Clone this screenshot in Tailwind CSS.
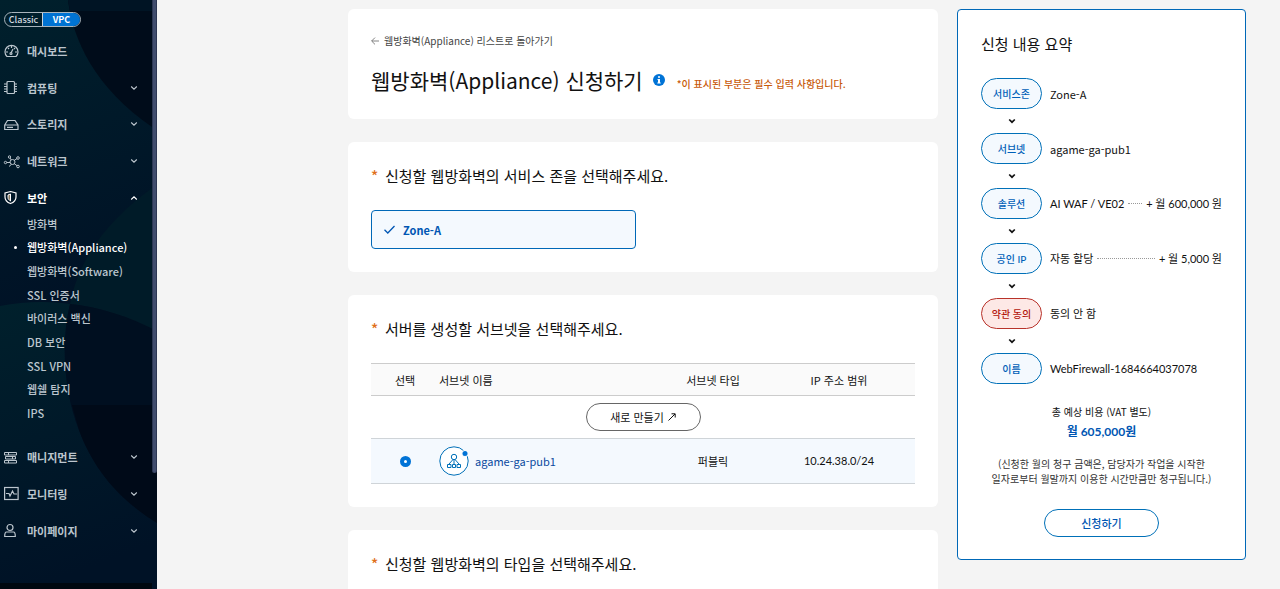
<!DOCTYPE html>
<html lang="ko">
<head>
  <meta charset="UTF-8">
  <meta name="viewport" content="width=device-width, initial-scale=1">
  <title>웹방화벽(Appliance) 신청하기</title>
  <script src="https://cdn.jsdelivr.net/npm/@tailwindcss/browser@4"></script>
</head>
<body class="flex h-screen overflow-hidden bg-[#f4f4f4] font-['Noto_Sans_CJK_KR',sans-serif] text-[11px] leading-4 text-[#111]">

  <!-- icons shared by the menu and the summary -->
  <svg class="hidden">
    <symbol id="down" viewBox="0 0 8 8"><path d="M1.200 2.500 4 5.200l2.800-2.700" fill="none" stroke="currentColor" stroke-width="1.100"/></symbol>
    <symbol id="step" viewBox="0 0 8 8"><path d="M1.200 2.500 4 5.200l2.800-2.700" fill="none" stroke="currentColor" stroke-width="1.700"/></symbol>
  </svg>

  <!-- Sidebar -->
  <aside class="relative flex w-[157px] shrink-0 overflow-hidden bg-[#001426] text-[#bcc6ce]">
    <svg class="absolute inset-0" width="157" height="589" viewBox="0 0 157 589" aria-hidden="true">
      <defs>
        <linearGradient id="teal" x1="0" y1="0" x2="0.200" y2="1">
          <stop offset="0" stop-color="#00202c"/>
          <stop offset="1" stop-color="#001226"/>
        </linearGradient>
      </defs>
      <path d="M0 0H157V310H0Z" fill="url(#teal)"/>
      <path d="M68 0C73 40 95 88 152 127V0Z" fill="#000c1a"/>
      <path d="M68 0H157V11H70Z" fill="#001424"/>
      <path d="M152 188C115 215 80 252 70 304C100 307 130 317 152 331Z" fill="#001b28"/>
      <path d="M0 306C25 301 50 301 70 304C60 345 65 395 79 430C92 465 115 497 157 523V589H0Z" fill="url(#teal)"/>
      <path d="M70 304C100 307 130 317 157 331V523C115 497 92 465 79 430C65 395 60 345 70 304Z" fill="#000f20"/>
      <path d="M72 405H157V523C115 497 92 465 79 430Z" fill="#000a18"/>
      <path d="M0 583H152V589H0Z" fill="#000810"/>
    </svg>

    <nav class="relative flex-1 pt-3 font-medium">
      <div class="ml-1 flex h-[15px] w-[77px] overflow-hidden rounded-full border border-[#a9b4bc] text-[9px] leading-[13px]">
        <button class="flex-1 text-[#d5dce0]">Classic</button>
        <button class="flex-1 border-l border-[#c8d4dc] bg-[#0073d2] font-bold text-white">VPC</button>
      </div>

      <ul class="mt-[6px] grid h-[183px] auto-rows-fr pr-[14px] pl-1 font-bold">
        <li class="flex">
          <a href="#" class="flex flex-1 items-center">
            <svg class="mr-2 size-[15px]" viewBox="0 0 15 15" fill="none" stroke="currentColor" stroke-width="1.200"><path d="M3 12.500A6.500 6.500 0 1 1 12 12.500Z"/><path d="M7 9 9 5M7.500 2v2M2 8h2M11 8h2M4 4l1 1M11 4l-1 1"/><circle cx="7" cy="9.500" r="1"/></svg>
            대시보드
          </a>
        </li>
        <li class="flex">
          <button class="flex flex-1 items-center">
            <svg class="mr-2 size-[15px]" viewBox="0 0 15 15" fill="none" stroke="currentColor" stroke-width="1.200"><rect x="3" y="1.500" width="7.500" height="12" rx="1"/><path d="M0 4h3M0 6.500h3M0 9h3M0 11.500h3M10.500 4h2.500M10.500 6.500h2.500M10.500 9h2.500M10.500 11.500h2.500"/></svg>
            컴퓨팅<svg class="ml-auto size-2"><use href="#down"/></svg>
          </button>
        </li>
        <li class="flex">
          <button class="flex flex-1 items-center">
            <svg class="mr-2 size-[15px]" viewBox="0 0 15 15" fill="none" stroke="currentColor" stroke-width="1.200"><path d="M.7 8 3.500 3.500h7.500L14 8v4.500H.7ZM.7 8h13.300M3 10.300h6"/></svg>
            스토리지<svg class="ml-auto size-2"><use href="#down"/></svg>
          </button>
        </li>
        <li class="flex">
          <button class="flex flex-1 items-center">
            <svg class="mr-2 size-[15px] overflow-visible" viewBox="0 0 15 15" fill="none" stroke="currentColor"><circle cx="8.500" cy="8" r="2.500"/><circle cx="1.500" cy="8.500" r="1.200"/><circle cx="5.500" cy="3" r="1.200"/><circle cx="14" cy="4" r="1.300"/><circle cx="14" cy="12.500" r="1.300"/><path d="M2.700 8.500h3.300M6 4l1.300 2M10.300 6.300l2.700-1.700M10.300 9.700l2.700 2M7.500 10.300 5 12.500"/></svg>
            네트워크<svg class="ml-auto size-2"><use href="#down"/></svg>
          </button>
        </li>
        <li class="flex">
          <button class="flex flex-1 items-center text-white" aria-expanded="true">
            <svg class="mr-2 size-[15px]" viewBox="0 0 15 15" fill="none" stroke="currentColor"><path d="M6.500 1.500 12 3v4c0 3-2.500 5.500-5.500 6.500C3.500 12.500 1 10 1 7V3Z" stroke-width="1.200"/><path d="M6.500 4 4 5v2.500c0 1.500 1 2.500 2.500 3.500Z" fill="#8a7a60"/></svg>
            보안<svg class="ml-auto size-2 rotate-180"><use href="#down"/></svg>
          </button>
        </li>
      </ul>

      <ul class="-mt-1 grid h-[213px] auto-rows-fr items-center pl-[27px]">
        <li><a href="#">방화벽</a></li>
        <li class="relative text-white"><span class="absolute top-[7px] -left-[13px] size-[3px] rounded-full bg-white"></span><a href="#" aria-current="page">웹방화벽(Appliance)</a></li>
        <li><a href="#">웹방화벽(Software)</a></li>
        <li><a href="#">SSL 인증서</a></li>
        <li><a href="#">바이러스 백신</a></li>
        <li><a href="#">DB 보안</a></li>
        <li><a href="#">SSL VPN</a></li>
        <li><a href="#">웹쉘 탐지</a></li>
        <li><a href="#">IPS</a></li>
      </ul>

      <ul class="mt-[14px] grid h-[110px] auto-rows-fr pr-[14px] pl-1 font-bold">
        <li class="flex">
          <button class="flex flex-1 items-center">
            <svg class="mr-2 size-[15px]" viewBox="0 0 15 15" fill="none" stroke="currentColor"><path d="M.5 2.500h12v2.500H.5ZM1.500 6.500h10v2.500h-10ZM.5 10.500h12V13H.5ZM4.500 2.500V5M8.500 6.500V9M4.500 10.500V13"/></svg>
            매니지먼트<svg class="ml-auto size-2"><use href="#down"/></svg>
          </button>
        </li>
        <li class="flex">
          <button class="flex flex-1 items-center">
            <svg class="mr-2 size-[15px]" viewBox="0 0 15 15" fill="none" stroke="currentColor" stroke-width="1.200"><rect x=".6" y="1.500" width="13.500" height="12"/><path d="M2 7.500h3L6 10l2.500-5L10 8h3"/></svg>
            모니터링<svg class="ml-auto size-2"><use href="#down"/></svg>
          </button>
        </li>
        <li class="flex">
          <button class="flex flex-1 items-center">
            <svg class="mr-2 size-[15px]" viewBox="0 0 15 15" fill="none" stroke="currentColor" stroke-width="1.200"><circle cx="6" cy="4.500" r="3"/><path d="M2.500 9h7c1 0 1.800 2 1.800 4.500H.7C.7 11 1.500 9 2.500 9Z"/></svg>
            마이페이지<svg class="ml-auto size-2"><use href="#down"/></svg>
          </button>
        </li>
      </ul>
    </nav>

    <!-- scroll thumb -->
    <div class="relative h-[473px] w-[5px] rounded-b-full border-x border-[#2c3753] bg-[#414d6d]"></div>
  </aside>

  <div class="flex flex-1 items-start gap-[19px] pt-[9px] pr-[34px] pl-[191px]">

    <main class="flex min-w-0 flex-1 flex-col gap-[23px]">
      <section class="h-[110px] rounded-md bg-white px-[23px] pt-6">
        <a href="#" class="flex items-center gap-[5px] text-[10px] text-[#444]">
          <svg class="size-[8px]" viewBox="0 0 8 8" fill="none" stroke="#666" stroke-width=".8"><path d="M8 4H.8M4 .6.6 4 4 7.400"/></svg>
          웹방화벽(Appliance) 리스트로 돌아가기
        </a>
        <div class="mt-[15px] flex items-center">
          <h1 class="text-[21px] leading-8">웹방화벽(Appliance) 신청하기</h1>
          <svg class="ml-[10px] size-3" viewBox="0 0 12 12"><circle cx="6" cy="6" r="6" fill="#0073d6"/><path d="M5 2.200h2v1.600H5ZM4.500 5H7v3.500h.7v1H4.300v-1H5V6h-.5Z" fill="#fff"/></svg>
          <p class="mt-2 ml-3 text-[10px] font-medium text-[#c85a0a]">*이 표시된 부분은 필수 입력 사항입니다.</p>
        </div>
      </section>

      <section class="h-[130px] rounded-md bg-white px-[23px] pt-6">
        <h2 class="flex text-[15px] leading-5"><span class="w-[14px] font-medium text-[#e0701a]">*</span>신청할 웹방화벽의 서비스 존을 선택해주세요.</h2>
        <label class="mt-6 flex h-[39px] w-[265px] items-center rounded-[4px] border border-[#0068b7] bg-[#f4f9fe] pl-3 font-bold text-[#0056b3]">
          <input type="radio" name="zone" class="sr-only" checked>
          <svg class="mr-2 size-[11px]" viewBox="0 0 11 11" fill="none" stroke="currentColor" stroke-width="1.300"><path d="M.5 5.800 3.800 9 10.500 2"/></svg>
          Zone-A
        </label>
      </section>

      <section class="h-[212px] rounded-md bg-white px-[23px] pt-6">
        <h2 class="flex text-[15px] leading-5"><span class="w-[14px] font-medium text-[#e0701a]">*</span>서버를 생성할 서브넷을 선택해주세요.</h2>
        <table class="mt-6 w-full border-collapse">
          <thead>
            <tr class="h-8 border-y border-[#ccc] bg-[#fafafa]">
              <th class="w-[68px] font-normal">선택</th>
              <th class="text-left font-normal">서브넷 이름</th>
              <th class="w-[100px] font-normal">서브넷 타입</th>
              <th class="w-[152px] font-normal">IP 주소 범위</th>
            </tr>
          </thead>
          <tbody>
            <tr class="h-[43px]">
              <td colspan="4" class="text-center">
                <button class="inline-flex h-7 w-[115px] items-center justify-center gap-1 rounded-full border border-[#666] align-middle">
                  새로 만들기
                  <svg class="size-2" viewBox="0 0 8 8" fill="none" stroke="currentColor"><path d="M.5 7.500 7 1M3.500.8h3.700v3.700"/></svg>
                </button>
              </td>
            </tr>
            <tr class="h-[45px] border-y border-[#cfd4d8] bg-[#f4f9fe] text-center">
              <td><input id="subnet1" type="radio" name="subnet" class="mx-auto block size-[11px] appearance-none rounded-full border-4 border-[#0073d6] bg-white" checked></td>
              <td>
                <label for="subnet1" class="flex items-center gap-[6px] text-[#0a4a9e]">
                  <svg class="size-[30px]" viewBox="0 0 30 30" fill="none" stroke="#0070b8"><circle cx="15" cy="15" r="14.200" fill="#fff"/><circle cx="15" cy="11" r="2.700"/><path d="M14 13.500 10 18M16 13.500 20 18M15 13.500V18M8.500 18.500h3.500v3H8.500ZM13.500 18.500h3v3h-3ZM18 18.500h3.500v3H18Z"/><circle cx="26" cy="7.500" r="3.500" fill="#f4f9fe" stroke="none"/><circle cx="26" cy="7.500" r="2.500" fill="#0073d6" stroke="none"/></svg>
                  agame-ga-pub1
                </label>
              </td>
              <td>퍼블릭</td>
              <td class="font-['Lato',sans-serif]">10.24.38.0/24</td>
            </tr>
          </tbody>
        </table>
      </section>

      <section class="h-[130px] rounded-md bg-white px-[23px] pt-6">
        <h2 class="flex text-[15px] leading-5"><span class="w-[14px] font-medium text-[#e0701a]">*</span>신청할 웹방화벽의 타입을 선택해주세요.</h2>
      </section>
    </main>

    <!-- Summary -->
    <aside class="h-[551px] w-[289px] shrink-0 rounded-[4px] border border-[#0068b7] bg-white px-[23px] pt-6">
      <h2 class="text-[15px] leading-5">신청 내용 요약</h2>

      <dl class="mt-6 font-['Lato','Noto_Sans_CJK_KR',sans-serif]">
        <div class="flex items-center gap-2">
          <dt class="flex h-[31px] w-[61px] items-center justify-center rounded-full border border-[#0070b8] bg-[#f4f9fe] text-[10px] font-medium text-[#0060b8]">서비스존</dt>
          <dd class="font-['Noto_Sans_CJK_KR',sans-serif]">Zone-A</dd>
        </div>
        <div class="flex h-6 w-[61px] items-center justify-center"><svg class="size-2"><use href="#step"/></svg></div>
        <div class="flex items-center gap-2">
          <dt class="flex h-[31px] w-[61px] items-center justify-center rounded-full border border-[#0070b8] bg-[#f4f9fe] text-[10px] font-medium text-[#0060b8]">서브넷</dt>
          <dd class="font-['Noto_Sans_CJK_KR',sans-serif]">agame-ga-pub1</dd>
        </div>
        <div class="flex h-6 w-[61px] items-center justify-center"><svg class="size-2"><use href="#step"/></svg></div>
        <div class="flex items-center gap-2">
          <dt class="flex h-[31px] w-[61px] items-center justify-center rounded-full border border-[#0070b8] bg-[#f4f9fe] text-[10px] font-medium text-[#0060b8]">솔루션</dt>
          <dd class="flex flex-1 items-center gap-1">AI WAF / VE02<span class="flex-1 border-t border-dotted border-[#999]"></span>+ 월 600,000 원</dd>
        </div>
        <div class="flex h-6 w-[61px] items-center justify-center"><svg class="size-2"><use href="#step"/></svg></div>
        <div class="flex items-center gap-2">
          <dt class="flex h-[31px] w-[61px] items-center justify-center rounded-full border border-[#0070b8] bg-[#f4f9fe] text-[10px] font-medium text-[#0060b8]">공인 IP</dt>
          <dd class="flex flex-1 items-center gap-1">자동 할당<span class="flex-1 border-t border-dotted border-[#999]"></span>+ 월 5,000 원</dd>
        </div>
        <div class="flex h-6 w-[61px] items-center justify-center"><svg class="size-2"><use href="#step"/></svg></div>
        <div class="flex items-center gap-2">
          <dt class="flex h-[31px] w-[61px] items-center justify-center rounded-full border border-[#b8322a] bg-[#fde8e6] text-[10px] font-medium text-[#b3150c]">약관 동의</dt>
          <dd>동의 안 함</dd>
        </div>
        <div class="flex h-6 w-[61px] items-center justify-center"><svg class="size-2"><use href="#step"/></svg></div>
        <div class="flex items-center gap-2">
          <dt class="flex h-[31px] w-[61px] items-center justify-center rounded-full border border-[#0070b8] bg-[#f4f9fe] text-[10px] font-medium text-[#0060b8]">이름</dt>
          <dd>WebFirewall-1684664037078</dd>
        </div>
      </dl>

      <div class="mt-5 text-center text-[10px]">
        <p>총 예상 비용 (VAT 별도)</p>
        <p class="mt-1 font-['Lato','Noto_Sans_CJK_KR',sans-serif] text-[12px] font-bold text-[#0056b3]">월 605,000원</p>
        <p class="mt-4 leading-[15px] whitespace-nowrap text-[#333]">(신청한 월의 청구 금액은, 담당자가 작업을 시작한<br>일자로부터 월말까지 이용한 시간만큼만 청구됩니다.)</p>
        <button class="mt-[23px] h-7 w-[115px] rounded-full border border-[#0070b8] text-[11px] font-medium text-[#0056b3]">신청하기</button>
      </div>
    </aside>
  </div>

</body>
</html>
